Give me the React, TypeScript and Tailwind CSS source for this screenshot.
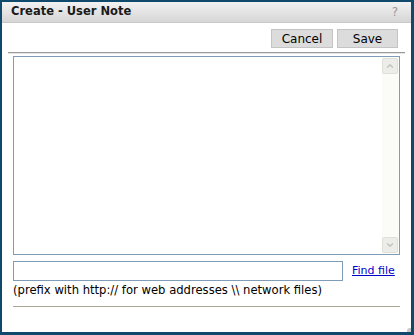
import { ChevronDown, ChevronUp } from "lucide-react"

const font = { fontFamily: "Tahoma, 'DejaVu Sans', Verdana, sans-serif" }

export default function App() {
    return (
        <div className="w-[414px] h-[335px] bg-[#0f4a6d] pl-[2px] pr-[3px] pt-[2px] pb-[3px]" style={font}>
            <div className="relative h-full bg-white flex flex-col rounded-br-[4px]">
                {/* title bar */}
                <div className="h-[21px] flex items-center justify-between px-[9px] bg-gradient-to-b from-[#f2f2f2] to-[#d6d6d6] border-b border-[#c8c8c8]">
                    <span className="text-[11.5px] font-bold text-[#1a1a1a]">Create - User Note</span>
                    <span className="text-[12px] text-[#999] mr-[4px]">?</span>
                </div>

                {/* buttons */}
                <div className="flex justify-end gap-[4px] pr-[13px] pt-[6px]">
                    <button className="w-[62px] h-[19px] bg-[#dcdcdc] border border-[#c4c4c4] text-[12px] text-black leading-none">Cancel</button>
                    <button className="w-[61px] h-[19px] bg-[#dcdcdc] border border-[#c4c4c4] text-[12px] text-black leading-none">Save</button>
                </div>
                <div className="mx-[6px] mt-[4px] h-[2px] bg-[#9a9a9a] border-b border-[#e6e6e6]" />

                {/* note area */}
                <div className="mx-[11px] mt-[2px] h-[199px] border border-[#7f9db9] flex justify-end">
                    <div className="w-[17px] flex flex-col justify-between py-[1px] pr-[1px] bg-[#fbfbf7]">
                        <div className="h-[16px] bg-[#ecece8] border border-[#e0e0da] flex items-center justify-center rounded-[2px]">
                            <ChevronUp className="w-[10px] h-[10px] text-[#c0c0c0]" strokeWidth={3} />
                        </div>
                        <div className="h-[16px] bg-[#ecece8] border border-[#e0e0da] flex items-center justify-center rounded-[2px]">
                            <ChevronDown className="w-[10px] h-[10px] text-[#c0c0c0]" strokeWidth={3} />
                        </div>
                    </div>
                </div>

                {/* file row */}
                <div className="flex items-center mx-[11px] mt-[6px]">
                    <div className="w-[330px] h-[20px] border border-[#7f9db9]" />
                    <a className="ml-[9px] text-[11px] text-[#0000cc] underline">Find file</a>
                </div>
                <p className="mx-[11px] mt-[1px] text-[11.6px] text-black">(prefix with http:// for web addresses \\ network files)</p>
                <div className="mx-[11px] mt-[7px] h-px bg-[#aca899]" />

                <div className="absolute right-0 bottom-0 w-[4px] h-[4px] bg-[#c8c8c8] rounded-tl-[3px]" />
            </div>
        </div>
    )
}
